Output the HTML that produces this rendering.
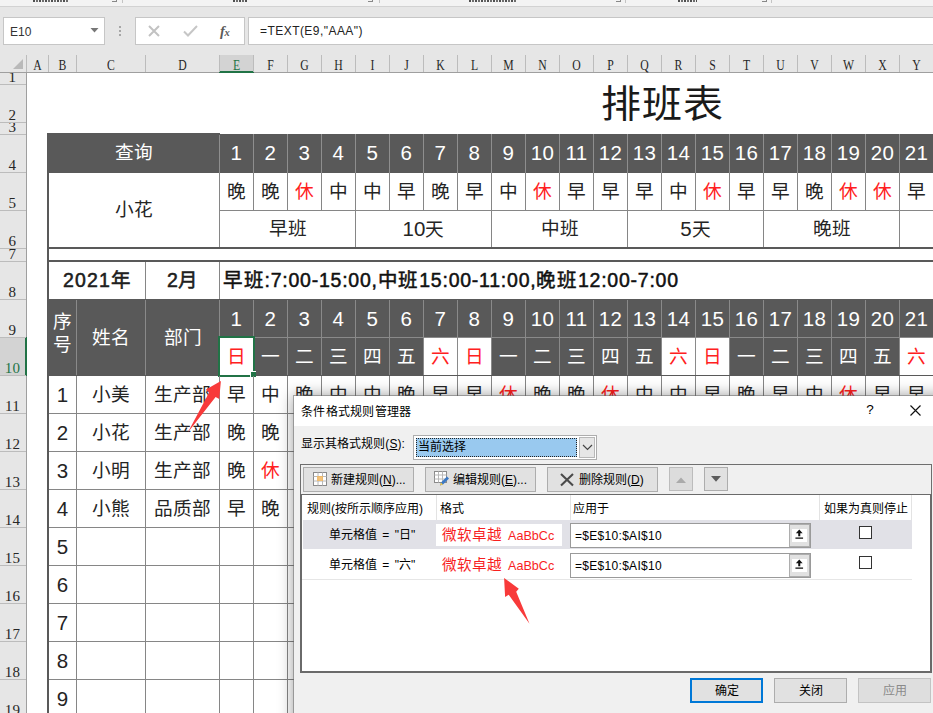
<!DOCTYPE html>
<html lang="zh-CN">
<head>
<meta charset="utf-8">
<title>排班表</title>
<style>
html,body{margin:0;padding:0}
body{width:933px;height:713px;overflow:hidden;position:relative;background:#e6e6e6;font-family:"Liberation Sans",sans-serif;}
#page{position:absolute;left:0;top:0;width:933px;height:713px;overflow:hidden}
#page div,#page svg{position:absolute;overflow:visible}
#page div>span,#page div>u{position:static}
</style>
</head>
<body>
<div id="page">
<div id="top">
<div style="left:0px;top:0px;width:933px;height:6px;background:#f3f3f3"></div>
<div style="left:0px;top:6px;width:933px;height:1px;background:#d2d2d2"></div>
<div style="left:33px;top:0px;width:36px;height:2px;background:repeating-linear-gradient(90deg,#333 0 2px,transparent 2px 3px,#555 3px 5px,transparent 5px 6px);opacity:.85"></div>
<div style="left:233px;top:0px;width:14px;height:2px;background:repeating-linear-gradient(90deg,#333 0 2px,transparent 2px 3px,#555 3px 5px,transparent 5px 6px);opacity:.85"></div>
<div style="left:469px;top:0px;width:47px;height:2px;background:repeating-linear-gradient(90deg,#333 0 2px,transparent 2px 3px,#555 3px 5px,transparent 5px 6px);opacity:.85"></div>
<div style="left:678px;top:0px;width:19px;height:2px;background:repeating-linear-gradient(90deg,#333 0 2px,transparent 2px 3px,#555 3px 5px,transparent 5px 6px);opacity:.85"></div>
<div style="left:112px;top:0px;width:5px;height:2px;border-right:1px solid #888;border-bottom:1px solid #888;box-sizing:border-box"></div>
<div style="left:368px;top:0px;width:5px;height:2px;border-right:1px solid #888;border-bottom:1px solid #888;box-sizing:border-box"></div>
<div style="left:616px;top:0px;width:5px;height:2px;border-right:1px solid #888;border-bottom:1px solid #888;box-sizing:border-box"></div>
<div style="left:762px;top:0px;width:5px;height:2px;border-right:1px solid #888;border-bottom:1px solid #888;box-sizing:border-box"></div>
<div style="left:122px;top:0px;width:1px;height:3px;background:#c4c4c4"></div>
<div style="left:379px;top:0px;width:1px;height:3px;background:#c4c4c4"></div>
<div style="left:625px;top:0px;width:1px;height:3px;background:#c4c4c4"></div>
<div style="left:771px;top:0px;width:1px;height:3px;background:#c4c4c4"></div>
<div style="left:3px;top:17px;width:102px;height:28px;background:#fff;border:1px solid #c6c6c6;box-sizing:border-box"></div>
<div style="left:10px;top:18px;width:60px;height:28px;line-height:28px;font-size:12px;color:#333">E10</div>
<svg style="left:90px;top:28px" width="9" height="5" viewBox="0 0 9 5"><path d="M0.5 0h8L4.5 4.5z" fill="#777"/></svg>
<div style="left:119px;top:26px;width:2px;height:2px;background:#a6a6a6"></div>
<div style="left:119px;top:30px;width:2px;height:2px;background:#a6a6a6"></div>
<div style="left:119px;top:34px;width:2px;height:2px;background:#a6a6a6"></div>
<div style="left:135px;top:17px;width:110px;height:28px;background:#fff;border:1px solid #c6c6c6;box-sizing:border-box"></div>
<svg style="left:148px;top:25px" width="12" height="12" viewBox="0 0 12 12"><path d="M1 1L11 11M11 1L1 11" stroke="#c2c2c2" stroke-width="2" fill="none"/></svg>
<svg style="left:183px;top:25px" width="15" height="12" viewBox="0 0 15 12"><path d="M1 6.5L5 10.5L14 1" stroke="#c6c6c6" stroke-width="2" fill="none"/></svg>
<div style="left:220px;top:20px;width:20px;height:22px;font-family:'Liberation Serif',serif;font-style:italic;font-weight:bold;font-size:14.5px;line-height:22px;color:#5a5a5a;letter-spacing:-0.3px">f<span style="font-size:10.5px">x</span></div>
<div style="left:248px;top:17px;width:690px;height:28px;background:#fff;border:1px solid #c6c6c6;box-sizing:border-box"></div>
<div style="left:260px;top:17px;width:300px;height:28px;line-height:28px;font-size:12px;letter-spacing:0.45px;color:#222">=TEXT(E9,"AAA")</div>
</div>
<div id="sheet">
<div style="left:27px;top:73px;width:906px;height:640px;background:#fff"></div>
<div style="left:0px;top:55px;width:933px;height:18px;background:#e6e6e6"></div>
<div style="left:0px;top:72px;width:933px;height:1px;background:#9f9f9f"></div>
<svg style="left:13px;top:59px" width="10" height="10" viewBox="0 0 10 10"><path d="M10 0V10H0z" fill="#b9b9b9"/></svg>
<div style="left:220px;top:55px;width:34px;height:17px;background:#d3d3d3"></div>
<div style="left:219px;top:71px;width:35px;height:2px;background:#217346"></div>
<div style="left:27px;top:57px;width:21px;height:16px;text-align:center;line-height:17px;font-size:14.67px;transform:scaleX(.8);font-family:'Liberation Serif',serif;color:#262626">A</div>
<div style="left:48px;top:55px;width:1px;height:17px;background:#bcbcbc"></div>
<div style="left:49px;top:57px;width:27px;height:16px;text-align:center;line-height:17px;font-size:14.67px;transform:scaleX(.8);font-family:'Liberation Serif',serif;color:#262626">B</div>
<div style="left:76px;top:55px;width:1px;height:17px;background:#bcbcbc"></div>
<div style="left:77px;top:57px;width:68px;height:16px;text-align:center;line-height:17px;font-size:14.67px;transform:scaleX(.8);font-family:'Liberation Serif',serif;color:#262626">C</div>
<div style="left:145px;top:55px;width:1px;height:17px;background:#bcbcbc"></div>
<div style="left:146px;top:57px;width:73px;height:16px;text-align:center;line-height:17px;font-size:14.67px;transform:scaleX(.8);font-family:'Liberation Serif',serif;color:#262626">D</div>
<div style="left:219px;top:55px;width:1px;height:17px;background:#bcbcbc"></div>
<div style="left:220px;top:57px;width:33px;height:16px;text-align:center;line-height:17px;font-size:14.67px;transform:scaleX(.8);font-family:'Liberation Serif',serif;color:#217346">E</div>
<div style="left:253px;top:55px;width:1px;height:17px;background:#bcbcbc"></div>
<div style="left:254px;top:57px;width:33px;height:16px;text-align:center;line-height:17px;font-size:14.67px;transform:scaleX(.8);font-family:'Liberation Serif',serif;color:#262626">F</div>
<div style="left:287px;top:55px;width:1px;height:17px;background:#bcbcbc"></div>
<div style="left:288px;top:57px;width:33px;height:16px;text-align:center;line-height:17px;font-size:14.67px;transform:scaleX(.8);font-family:'Liberation Serif',serif;color:#262626">G</div>
<div style="left:321px;top:55px;width:1px;height:17px;background:#bcbcbc"></div>
<div style="left:322px;top:57px;width:33px;height:16px;text-align:center;line-height:17px;font-size:14.67px;transform:scaleX(.8);font-family:'Liberation Serif',serif;color:#262626">H</div>
<div style="left:355px;top:55px;width:1px;height:17px;background:#bcbcbc"></div>
<div style="left:356px;top:57px;width:33px;height:16px;text-align:center;line-height:17px;font-size:14.67px;transform:scaleX(.8);font-family:'Liberation Serif',serif;color:#262626">I</div>
<div style="left:389px;top:55px;width:1px;height:17px;background:#bcbcbc"></div>
<div style="left:390px;top:57px;width:33px;height:16px;text-align:center;line-height:17px;font-size:14.67px;transform:scaleX(.8);font-family:'Liberation Serif',serif;color:#262626">J</div>
<div style="left:423px;top:55px;width:1px;height:17px;background:#bcbcbc"></div>
<div style="left:424px;top:57px;width:33px;height:16px;text-align:center;line-height:17px;font-size:14.67px;transform:scaleX(.8);font-family:'Liberation Serif',serif;color:#262626">K</div>
<div style="left:457px;top:55px;width:1px;height:17px;background:#bcbcbc"></div>
<div style="left:458px;top:57px;width:33px;height:16px;text-align:center;line-height:17px;font-size:14.67px;transform:scaleX(.8);font-family:'Liberation Serif',serif;color:#262626">L</div>
<div style="left:491px;top:55px;width:1px;height:17px;background:#bcbcbc"></div>
<div style="left:492px;top:57px;width:33px;height:16px;text-align:center;line-height:17px;font-size:14.67px;transform:scaleX(.8);font-family:'Liberation Serif',serif;color:#262626">M</div>
<div style="left:525px;top:55px;width:1px;height:17px;background:#bcbcbc"></div>
<div style="left:526px;top:57px;width:33px;height:16px;text-align:center;line-height:17px;font-size:14.67px;transform:scaleX(.8);font-family:'Liberation Serif',serif;color:#262626">N</div>
<div style="left:559px;top:55px;width:1px;height:17px;background:#bcbcbc"></div>
<div style="left:560px;top:57px;width:33px;height:16px;text-align:center;line-height:17px;font-size:14.67px;transform:scaleX(.8);font-family:'Liberation Serif',serif;color:#262626">O</div>
<div style="left:593px;top:55px;width:1px;height:17px;background:#bcbcbc"></div>
<div style="left:594px;top:57px;width:33px;height:16px;text-align:center;line-height:17px;font-size:14.67px;transform:scaleX(.8);font-family:'Liberation Serif',serif;color:#262626">P</div>
<div style="left:627px;top:55px;width:1px;height:17px;background:#bcbcbc"></div>
<div style="left:628px;top:57px;width:33px;height:16px;text-align:center;line-height:17px;font-size:14.67px;transform:scaleX(.8);font-family:'Liberation Serif',serif;color:#262626">Q</div>
<div style="left:661px;top:55px;width:1px;height:17px;background:#bcbcbc"></div>
<div style="left:662px;top:57px;width:33px;height:16px;text-align:center;line-height:17px;font-size:14.67px;transform:scaleX(.8);font-family:'Liberation Serif',serif;color:#262626">R</div>
<div style="left:695px;top:55px;width:1px;height:17px;background:#bcbcbc"></div>
<div style="left:696px;top:57px;width:33px;height:16px;text-align:center;line-height:17px;font-size:14.67px;transform:scaleX(.8);font-family:'Liberation Serif',serif;color:#262626">S</div>
<div style="left:729px;top:55px;width:1px;height:17px;background:#bcbcbc"></div>
<div style="left:730px;top:57px;width:33px;height:16px;text-align:center;line-height:17px;font-size:14.67px;transform:scaleX(.8);font-family:'Liberation Serif',serif;color:#262626">T</div>
<div style="left:763px;top:55px;width:1px;height:17px;background:#bcbcbc"></div>
<div style="left:764px;top:57px;width:33px;height:16px;text-align:center;line-height:17px;font-size:14.67px;transform:scaleX(.8);font-family:'Liberation Serif',serif;color:#262626">U</div>
<div style="left:797px;top:55px;width:1px;height:17px;background:#bcbcbc"></div>
<div style="left:798px;top:57px;width:33px;height:16px;text-align:center;line-height:17px;font-size:14.67px;transform:scaleX(.8);font-family:'Liberation Serif',serif;color:#262626">V</div>
<div style="left:831px;top:55px;width:1px;height:17px;background:#bcbcbc"></div>
<div style="left:832px;top:57px;width:33px;height:16px;text-align:center;line-height:17px;font-size:14.67px;transform:scaleX(.8);font-family:'Liberation Serif',serif;color:#262626">W</div>
<div style="left:865px;top:55px;width:1px;height:17px;background:#bcbcbc"></div>
<div style="left:866px;top:57px;width:33px;height:16px;text-align:center;line-height:17px;font-size:14.67px;transform:scaleX(.8);font-family:'Liberation Serif',serif;color:#262626">X</div>
<div style="left:899px;top:55px;width:1px;height:17px;background:#bcbcbc"></div>
<div style="left:900px;top:57px;width:33px;height:16px;text-align:center;line-height:17px;font-size:14.67px;transform:scaleX(.8);font-family:'Liberation Serif',serif;color:#262626">Y</div>
<div style="left:933px;top:55px;width:1px;height:17px;background:#bcbcbc"></div>
<div style="left:26px;top:55px;width:1px;height:17px;background:#bcbcbc"></div>
<div style="left:0px;top:73px;width:26px;height:640px;background:#e6e6e6"></div>
<div style="left:26px;top:73px;width:1px;height:640px;background:#9f9f9f"></div>
<div style="left:0px;top:338px;width:26px;height:37px;background:#d3d3d3"></div>
<div style="left:25px;top:337px;width:2px;height:39px;background:#217346"></div>
<div style="left:0px;top:73px;width:25px;height:11px;overflow:hidden"><div style="left:0.5px;bottom:-1px;width:24px;height:15px;text-align:center;line-height:15px;font-size:15px;letter-spacing:0.3px;font-family:'Liberation Serif',serif;color:#262626">1</div></div>
<div style="left:0px;top:84px;width:26px;height:1px;background:#bcbcbc"></div>
<div style="left:0px;top:85px;width:25px;height:37px;overflow:hidden"><div style="left:0.5px;bottom:-1px;width:24px;height:15px;text-align:center;line-height:15px;font-size:15px;letter-spacing:0.3px;font-family:'Liberation Serif',serif;color:#262626">2</div></div>
<div style="left:0px;top:122px;width:26px;height:1px;background:#bcbcbc"></div>
<div style="left:0px;top:123px;width:25px;height:11px;overflow:hidden"><div style="left:0.5px;bottom:-1px;width:24px;height:15px;text-align:center;line-height:15px;font-size:15px;letter-spacing:0.3px;font-family:'Liberation Serif',serif;color:#262626">3</div></div>
<div style="left:0px;top:134px;width:26px;height:1px;background:#bcbcbc"></div>
<div style="left:0px;top:135px;width:25px;height:37px;overflow:hidden"><div style="left:0.5px;bottom:-1px;width:24px;height:15px;text-align:center;line-height:15px;font-size:15px;letter-spacing:0.3px;font-family:'Liberation Serif',serif;color:#262626">4</div></div>
<div style="left:0px;top:172px;width:26px;height:1px;background:#bcbcbc"></div>
<div style="left:0px;top:173px;width:25px;height:37px;overflow:hidden"><div style="left:0.5px;bottom:-1px;width:24px;height:15px;text-align:center;line-height:15px;font-size:15px;letter-spacing:0.3px;font-family:'Liberation Serif',serif;color:#262626">5</div></div>
<div style="left:0px;top:210px;width:26px;height:1px;background:#bcbcbc"></div>
<div style="left:0px;top:211px;width:25px;height:37px;overflow:hidden"><div style="left:0.5px;bottom:-1px;width:24px;height:15px;text-align:center;line-height:15px;font-size:15px;letter-spacing:0.3px;font-family:'Liberation Serif',serif;color:#262626">6</div></div>
<div style="left:0px;top:248px;width:26px;height:1px;background:#bcbcbc"></div>
<div style="left:0px;top:249px;width:25px;height:12px;overflow:hidden"><div style="left:0.5px;bottom:-1px;width:24px;height:15px;text-align:center;line-height:15px;font-size:15px;letter-spacing:0.3px;font-family:'Liberation Serif',serif;color:#262626">7</div></div>
<div style="left:0px;top:261px;width:26px;height:1px;background:#bcbcbc"></div>
<div style="left:0px;top:262px;width:25px;height:37px;overflow:hidden"><div style="left:0.5px;bottom:-1px;width:24px;height:15px;text-align:center;line-height:15px;font-size:15px;letter-spacing:0.3px;font-family:'Liberation Serif',serif;color:#262626">8</div></div>
<div style="left:0px;top:299px;width:26px;height:1px;background:#bcbcbc"></div>
<div style="left:0px;top:300px;width:25px;height:37px;overflow:hidden"><div style="left:0.5px;bottom:-1px;width:24px;height:15px;text-align:center;line-height:15px;font-size:15px;letter-spacing:0.3px;font-family:'Liberation Serif',serif;color:#262626">9</div></div>
<div style="left:0px;top:337px;width:26px;height:1px;background:#bcbcbc"></div>
<div style="left:0px;top:338px;width:25px;height:37px;overflow:hidden"><div style="left:0.5px;bottom:-1px;width:24px;height:15px;text-align:center;line-height:15px;font-size:15px;letter-spacing:0.3px;font-family:'Liberation Serif',serif;color:#217346">10</div></div>
<div style="left:0px;top:375px;width:26px;height:1px;background:#bcbcbc"></div>
<div style="left:0px;top:376px;width:25px;height:37px;overflow:hidden"><div style="left:0.5px;bottom:-1px;width:24px;height:15px;text-align:center;line-height:15px;font-size:15px;letter-spacing:0.3px;font-family:'Liberation Serif',serif;color:#262626">11</div></div>
<div style="left:0px;top:413px;width:26px;height:1px;background:#bcbcbc"></div>
<div style="left:0px;top:414px;width:25px;height:37px;overflow:hidden"><div style="left:0.5px;bottom:-1px;width:24px;height:15px;text-align:center;line-height:15px;font-size:15px;letter-spacing:0.3px;font-family:'Liberation Serif',serif;color:#262626">12</div></div>
<div style="left:0px;top:451px;width:26px;height:1px;background:#bcbcbc"></div>
<div style="left:0px;top:452px;width:25px;height:37px;overflow:hidden"><div style="left:0.5px;bottom:-1px;width:24px;height:15px;text-align:center;line-height:15px;font-size:15px;letter-spacing:0.3px;font-family:'Liberation Serif',serif;color:#262626">13</div></div>
<div style="left:0px;top:489px;width:26px;height:1px;background:#bcbcbc"></div>
<div style="left:0px;top:490px;width:25px;height:37px;overflow:hidden"><div style="left:0.5px;bottom:-1px;width:24px;height:15px;text-align:center;line-height:15px;font-size:15px;letter-spacing:0.3px;font-family:'Liberation Serif',serif;color:#262626">14</div></div>
<div style="left:0px;top:527px;width:26px;height:1px;background:#bcbcbc"></div>
<div style="left:0px;top:528px;width:25px;height:37px;overflow:hidden"><div style="left:0.5px;bottom:-1px;width:24px;height:15px;text-align:center;line-height:15px;font-size:15px;letter-spacing:0.3px;font-family:'Liberation Serif',serif;color:#262626">15</div></div>
<div style="left:0px;top:565px;width:26px;height:1px;background:#bcbcbc"></div>
<div style="left:0px;top:566px;width:25px;height:37px;overflow:hidden"><div style="left:0.5px;bottom:-1px;width:24px;height:15px;text-align:center;line-height:15px;font-size:15px;letter-spacing:0.3px;font-family:'Liberation Serif',serif;color:#262626">16</div></div>
<div style="left:0px;top:603px;width:26px;height:1px;background:#bcbcbc"></div>
<div style="left:0px;top:604px;width:25px;height:37px;overflow:hidden"><div style="left:0.5px;bottom:-1px;width:24px;height:15px;text-align:center;line-height:15px;font-size:15px;letter-spacing:0.3px;font-family:'Liberation Serif',serif;color:#262626">17</div></div>
<div style="left:0px;top:641px;width:26px;height:1px;background:#bcbcbc"></div>
<div style="left:0px;top:642px;width:25px;height:37px;overflow:hidden"><div style="left:0.5px;bottom:-1px;width:24px;height:15px;text-align:center;line-height:15px;font-size:15px;letter-spacing:0.3px;font-family:'Liberation Serif',serif;color:#262626">18</div></div>
<div style="left:0px;top:679px;width:26px;height:1px;background:#bcbcbc"></div>
<div style="left:0px;top:680px;width:25px;height:37px;overflow:hidden"><div style="left:0.5px;bottom:-1px;width:24px;height:15px;text-align:center;line-height:15px;font-size:15px;letter-spacing:0.3px;font-family:'Liberation Serif',serif;color:#262626">19</div></div>
<div style="left:560px;top:80px;width:204px;height:48px;text-align:center;line-height:48px;font-size:40px;color:#1a1a1a;letter-spacing:0.9px;text-indent:0.9px;transform:scaleY(.95)">排班表</div>
<div style="left:48px;top:133px;width:172px;height:40px;background:#595959"></div>
<div style="left:220px;top:134px;width:713px;height:39px;background:#595959"></div>
<div style="left:48px;top:133px;width:172px;height:40px;text-align:center;line-height:40px;font-size:18.67px;color:#fff;">查询</div>
<div style="left:220px;top:134px;width:33px;height:38px;text-align:center;line-height:38px;font-size:18.67px;color:#fff;font-size:20.5px;letter-spacing:0.4px;">1</div>
<div style="left:253px;top:134px;width:1px;height:39px;background:#8e8e8e"></div>
<div style="left:220px;top:173px;width:33px;height:37px;text-align:center;line-height:37px;font-size:18.67px;color:#242424;">晚</div>
<div style="left:253px;top:173px;width:1px;height:38px;background:#868686"></div>
<div style="left:254px;top:134px;width:33px;height:38px;text-align:center;line-height:38px;font-size:18.67px;color:#fff;font-size:20.5px;letter-spacing:0.4px;">2</div>
<div style="left:287px;top:134px;width:1px;height:39px;background:#8e8e8e"></div>
<div style="left:254px;top:173px;width:33px;height:37px;text-align:center;line-height:37px;font-size:18.67px;color:#242424;">晚</div>
<div style="left:287px;top:173px;width:1px;height:38px;background:#868686"></div>
<div style="left:288px;top:134px;width:33px;height:38px;text-align:center;line-height:38px;font-size:18.67px;color:#fff;font-size:20.5px;letter-spacing:0.4px;">3</div>
<div style="left:321px;top:134px;width:1px;height:39px;background:#8e8e8e"></div>
<div style="left:288px;top:173px;width:33px;height:37px;text-align:center;line-height:37px;font-size:18.67px;color:#ff2020;">休</div>
<div style="left:321px;top:173px;width:1px;height:38px;background:#868686"></div>
<div style="left:322px;top:134px;width:33px;height:38px;text-align:center;line-height:38px;font-size:18.67px;color:#fff;font-size:20.5px;letter-spacing:0.4px;">4</div>
<div style="left:355px;top:134px;width:1px;height:39px;background:#8e8e8e"></div>
<div style="left:322px;top:173px;width:33px;height:37px;text-align:center;line-height:37px;font-size:18.67px;color:#242424;">中</div>
<div style="left:355px;top:173px;width:1px;height:38px;background:#868686"></div>
<div style="left:356px;top:134px;width:33px;height:38px;text-align:center;line-height:38px;font-size:18.67px;color:#fff;font-size:20.5px;letter-spacing:0.4px;">5</div>
<div style="left:389px;top:134px;width:1px;height:39px;background:#8e8e8e"></div>
<div style="left:356px;top:173px;width:33px;height:37px;text-align:center;line-height:37px;font-size:18.67px;color:#242424;">中</div>
<div style="left:389px;top:173px;width:1px;height:38px;background:#868686"></div>
<div style="left:390px;top:134px;width:33px;height:38px;text-align:center;line-height:38px;font-size:18.67px;color:#fff;font-size:20.5px;letter-spacing:0.4px;">6</div>
<div style="left:423px;top:134px;width:1px;height:39px;background:#8e8e8e"></div>
<div style="left:390px;top:173px;width:33px;height:37px;text-align:center;line-height:37px;font-size:18.67px;color:#242424;">早</div>
<div style="left:423px;top:173px;width:1px;height:38px;background:#868686"></div>
<div style="left:424px;top:134px;width:33px;height:38px;text-align:center;line-height:38px;font-size:18.67px;color:#fff;font-size:20.5px;letter-spacing:0.4px;">7</div>
<div style="left:457px;top:134px;width:1px;height:39px;background:#8e8e8e"></div>
<div style="left:424px;top:173px;width:33px;height:37px;text-align:center;line-height:37px;font-size:18.67px;color:#242424;">晚</div>
<div style="left:457px;top:173px;width:1px;height:38px;background:#868686"></div>
<div style="left:458px;top:134px;width:33px;height:38px;text-align:center;line-height:38px;font-size:18.67px;color:#fff;font-size:20.5px;letter-spacing:0.4px;">8</div>
<div style="left:491px;top:134px;width:1px;height:39px;background:#8e8e8e"></div>
<div style="left:458px;top:173px;width:33px;height:37px;text-align:center;line-height:37px;font-size:18.67px;color:#242424;">早</div>
<div style="left:491px;top:173px;width:1px;height:38px;background:#868686"></div>
<div style="left:492px;top:134px;width:33px;height:38px;text-align:center;line-height:38px;font-size:18.67px;color:#fff;font-size:20.5px;letter-spacing:0.4px;">9</div>
<div style="left:525px;top:134px;width:1px;height:39px;background:#8e8e8e"></div>
<div style="left:492px;top:173px;width:33px;height:37px;text-align:center;line-height:37px;font-size:18.67px;color:#242424;">中</div>
<div style="left:525px;top:173px;width:1px;height:38px;background:#868686"></div>
<div style="left:526px;top:134px;width:33px;height:38px;text-align:center;line-height:38px;font-size:18.67px;color:#fff;font-size:20.5px;letter-spacing:0.4px;">10</div>
<div style="left:559px;top:134px;width:1px;height:39px;background:#8e8e8e"></div>
<div style="left:526px;top:173px;width:33px;height:37px;text-align:center;line-height:37px;font-size:18.67px;color:#ff2020;">休</div>
<div style="left:559px;top:173px;width:1px;height:38px;background:#868686"></div>
<div style="left:560px;top:134px;width:33px;height:38px;text-align:center;line-height:38px;font-size:18.67px;color:#fff;font-size:20.5px;letter-spacing:0.4px;">11</div>
<div style="left:593px;top:134px;width:1px;height:39px;background:#8e8e8e"></div>
<div style="left:560px;top:173px;width:33px;height:37px;text-align:center;line-height:37px;font-size:18.67px;color:#242424;">早</div>
<div style="left:593px;top:173px;width:1px;height:38px;background:#868686"></div>
<div style="left:594px;top:134px;width:33px;height:38px;text-align:center;line-height:38px;font-size:18.67px;color:#fff;font-size:20.5px;letter-spacing:0.4px;">12</div>
<div style="left:627px;top:134px;width:1px;height:39px;background:#8e8e8e"></div>
<div style="left:594px;top:173px;width:33px;height:37px;text-align:center;line-height:37px;font-size:18.67px;color:#242424;">早</div>
<div style="left:627px;top:173px;width:1px;height:38px;background:#868686"></div>
<div style="left:628px;top:134px;width:33px;height:38px;text-align:center;line-height:38px;font-size:18.67px;color:#fff;font-size:20.5px;letter-spacing:0.4px;">13</div>
<div style="left:661px;top:134px;width:1px;height:39px;background:#8e8e8e"></div>
<div style="left:628px;top:173px;width:33px;height:37px;text-align:center;line-height:37px;font-size:18.67px;color:#242424;">早</div>
<div style="left:661px;top:173px;width:1px;height:38px;background:#868686"></div>
<div style="left:662px;top:134px;width:33px;height:38px;text-align:center;line-height:38px;font-size:18.67px;color:#fff;font-size:20.5px;letter-spacing:0.4px;">14</div>
<div style="left:695px;top:134px;width:1px;height:39px;background:#8e8e8e"></div>
<div style="left:662px;top:173px;width:33px;height:37px;text-align:center;line-height:37px;font-size:18.67px;color:#242424;">中</div>
<div style="left:695px;top:173px;width:1px;height:38px;background:#868686"></div>
<div style="left:696px;top:134px;width:33px;height:38px;text-align:center;line-height:38px;font-size:18.67px;color:#fff;font-size:20.5px;letter-spacing:0.4px;">15</div>
<div style="left:729px;top:134px;width:1px;height:39px;background:#8e8e8e"></div>
<div style="left:696px;top:173px;width:33px;height:37px;text-align:center;line-height:37px;font-size:18.67px;color:#ff2020;">休</div>
<div style="left:729px;top:173px;width:1px;height:38px;background:#868686"></div>
<div style="left:730px;top:134px;width:33px;height:38px;text-align:center;line-height:38px;font-size:18.67px;color:#fff;font-size:20.5px;letter-spacing:0.4px;">16</div>
<div style="left:763px;top:134px;width:1px;height:39px;background:#8e8e8e"></div>
<div style="left:730px;top:173px;width:33px;height:37px;text-align:center;line-height:37px;font-size:18.67px;color:#242424;">早</div>
<div style="left:763px;top:173px;width:1px;height:38px;background:#868686"></div>
<div style="left:764px;top:134px;width:33px;height:38px;text-align:center;line-height:38px;font-size:18.67px;color:#fff;font-size:20.5px;letter-spacing:0.4px;">17</div>
<div style="left:797px;top:134px;width:1px;height:39px;background:#8e8e8e"></div>
<div style="left:764px;top:173px;width:33px;height:37px;text-align:center;line-height:37px;font-size:18.67px;color:#242424;">早</div>
<div style="left:797px;top:173px;width:1px;height:38px;background:#868686"></div>
<div style="left:798px;top:134px;width:33px;height:38px;text-align:center;line-height:38px;font-size:18.67px;color:#fff;font-size:20.5px;letter-spacing:0.4px;">18</div>
<div style="left:831px;top:134px;width:1px;height:39px;background:#8e8e8e"></div>
<div style="left:798px;top:173px;width:33px;height:37px;text-align:center;line-height:37px;font-size:18.67px;color:#242424;">晚</div>
<div style="left:831px;top:173px;width:1px;height:38px;background:#868686"></div>
<div style="left:832px;top:134px;width:33px;height:38px;text-align:center;line-height:38px;font-size:18.67px;color:#fff;font-size:20.5px;letter-spacing:0.4px;">19</div>
<div style="left:865px;top:134px;width:1px;height:39px;background:#8e8e8e"></div>
<div style="left:832px;top:173px;width:33px;height:37px;text-align:center;line-height:37px;font-size:18.67px;color:#ff2020;">休</div>
<div style="left:865px;top:173px;width:1px;height:38px;background:#868686"></div>
<div style="left:866px;top:134px;width:33px;height:38px;text-align:center;line-height:38px;font-size:18.67px;color:#fff;font-size:20.5px;letter-spacing:0.4px;">20</div>
<div style="left:899px;top:134px;width:1px;height:39px;background:#8e8e8e"></div>
<div style="left:866px;top:173px;width:33px;height:37px;text-align:center;line-height:37px;font-size:18.67px;color:#ff2020;">休</div>
<div style="left:899px;top:173px;width:1px;height:38px;background:#868686"></div>
<div style="left:900px;top:134px;width:33px;height:38px;text-align:center;line-height:38px;font-size:18.67px;color:#fff;font-size:20.5px;letter-spacing:0.4px;">21</div>
<div style="left:933px;top:134px;width:1px;height:39px;background:#8e8e8e"></div>
<div style="left:900px;top:173px;width:33px;height:37px;text-align:center;line-height:37px;font-size:18.67px;color:#242424;">早</div>
<div style="left:933px;top:173px;width:1px;height:38px;background:#868686"></div>
<div style="left:219px;top:135px;width:1px;height:38px;background:#8e8e8e"></div>
<div style="left:219px;top:173px;width:1px;height:75px;background:#868686"></div>
<div style="left:220px;top:210px;width:713px;height:1px;background:#868686"></div>
<div style="left:220px;top:211px;width:135px;height:36px;text-align:center;line-height:36px;font-size:18.67px;color:#242424;">早班</div>
<div style="left:355px;top:211px;width:1px;height:37px;background:#868686"></div>
<div style="left:356px;top:211px;width:135px;height:36px;text-align:center;line-height:36px;font-size:18.67px;color:#242424;"><span style="font-size:20.5px">10</span>天</div>
<div style="left:491px;top:211px;width:1px;height:37px;background:#868686"></div>
<div style="left:492px;top:211px;width:135px;height:36px;text-align:center;line-height:36px;font-size:18.67px;color:#242424;">中班</div>
<div style="left:627px;top:211px;width:1px;height:37px;background:#868686"></div>
<div style="left:628px;top:211px;width:135px;height:36px;text-align:center;line-height:36px;font-size:18.67px;color:#242424;"><span style="font-size:20.5px">5</span>天</div>
<div style="left:763px;top:211px;width:1px;height:37px;background:#868686"></div>
<div style="left:764px;top:211px;width:135px;height:36px;text-align:center;line-height:36px;font-size:18.67px;color:#242424;">晚班</div>
<div style="left:899px;top:211px;width:1px;height:37px;background:#868686"></div>
<div style="left:900px;top:211px;width:135px;height:36px;text-align:center;line-height:36px;font-size:18.67px;color:#242424;"></div>
<div style="left:1035px;top:211px;width:1px;height:37px;background:#868686"></div>
<div style="left:48px;top:173px;width:171px;height:74px;text-align:center;line-height:74px;font-size:18.67px;color:#242424;">小花</div>
<div style="left:47px;top:133px;width:2px;height:580px;background:#595959"></div>
<div style="left:47px;top:247px;width:886px;height:2px;background:#595959"></div>
<div style="left:47px;top:260px;width:886px;height:2px;background:#595959"></div>
<div style="left:49px;top:262px;width:96px;height:37px;text-align:center;line-height:37px;font-size:18.67px;color:#242424;font-size:19.5px;-webkit-text-stroke:0.5px #111;letter-spacing:1.1px;text-indent:1.1px;">2021年</div>
<div style="left:146px;top:262px;width:73px;height:37px;text-align:center;line-height:37px;font-size:18.67px;color:#242424;font-size:19.5px;-webkit-text-stroke:0.5px #111;">2月</div>
<div style="left:145px;top:262px;width:1px;height:38px;background:#868686"></div>
<div style="left:219px;top:262px;width:1px;height:38px;background:#868686"></div>
<div style="left:223px;top:262px;width:600px;height:37px;line-height:37px;font-size:18.67px;font-size:19.5px;-webkit-text-stroke:0.5px #111;color:#111;white-space:nowrap;letter-spacing:0.76px">早班:7:00-15:00,中班15:00-11:00,晚班12:00-7:00</div>
<div style="left:48px;top:299px;width:885px;height:77px;background:#595959"></div>
<div style="left:49px;top:310px;width:27px;height:50px;text-align:center;line-height:23px;font-size:18.67px;color:#fff">序<br>号</div>
<div style="left:77px;top:300px;width:68px;height:75px;text-align:center;line-height:75px;font-size:18.67px;color:#fff;">姓名</div>
<div style="left:146px;top:300px;width:73px;height:75px;text-align:center;line-height:75px;font-size:18.67px;color:#fff;">部门</div>
<div style="left:76px;top:300px;width:1px;height:75px;background:#8a8a8a"></div>
<div style="left:145px;top:300px;width:1px;height:75px;background:#8a8a8a"></div>
<div style="left:219px;top:300px;width:1px;height:75px;background:#8a8a8a"></div>
<div style="left:220px;top:300px;width:33px;height:37px;text-align:center;line-height:37px;font-size:18.67px;color:#fff;font-size:20.5px;letter-spacing:0.4px;">1</div>
<div style="left:220px;top:338px;width:33px;height:37px;text-align:center;line-height:37px;font-size:18.67px;color:#ff2020;background:#fff;">日</div>
<div style="left:253px;top:300px;width:1px;height:75px;background:#8a8a8a"></div>
<div style="left:254px;top:300px;width:33px;height:37px;text-align:center;line-height:37px;font-size:18.67px;color:#fff;font-size:20.5px;letter-spacing:0.4px;">2</div>
<div style="left:254px;top:338px;width:33px;height:37px;text-align:center;line-height:37px;font-size:18.67px;color:#fff;">一</div>
<div style="left:287px;top:300px;width:1px;height:75px;background:#8a8a8a"></div>
<div style="left:288px;top:300px;width:33px;height:37px;text-align:center;line-height:37px;font-size:18.67px;color:#fff;font-size:20.5px;letter-spacing:0.4px;">3</div>
<div style="left:288px;top:338px;width:33px;height:37px;text-align:center;line-height:37px;font-size:18.67px;color:#fff;">二</div>
<div style="left:321px;top:300px;width:1px;height:75px;background:#8a8a8a"></div>
<div style="left:322px;top:300px;width:33px;height:37px;text-align:center;line-height:37px;font-size:18.67px;color:#fff;font-size:20.5px;letter-spacing:0.4px;">4</div>
<div style="left:322px;top:338px;width:33px;height:37px;text-align:center;line-height:37px;font-size:18.67px;color:#fff;">三</div>
<div style="left:355px;top:300px;width:1px;height:75px;background:#8a8a8a"></div>
<div style="left:356px;top:300px;width:33px;height:37px;text-align:center;line-height:37px;font-size:18.67px;color:#fff;font-size:20.5px;letter-spacing:0.4px;">5</div>
<div style="left:356px;top:338px;width:33px;height:37px;text-align:center;line-height:37px;font-size:18.67px;color:#fff;">四</div>
<div style="left:389px;top:300px;width:1px;height:75px;background:#8a8a8a"></div>
<div style="left:390px;top:300px;width:33px;height:37px;text-align:center;line-height:37px;font-size:18.67px;color:#fff;font-size:20.5px;letter-spacing:0.4px;">6</div>
<div style="left:390px;top:338px;width:33px;height:37px;text-align:center;line-height:37px;font-size:18.67px;color:#fff;">五</div>
<div style="left:423px;top:300px;width:1px;height:75px;background:#8a8a8a"></div>
<div style="left:424px;top:300px;width:33px;height:37px;text-align:center;line-height:37px;font-size:18.67px;color:#fff;font-size:20.5px;letter-spacing:0.4px;">7</div>
<div style="left:424px;top:338px;width:33px;height:37px;text-align:center;line-height:37px;font-size:18.67px;color:#ff2020;background:#fff;">六</div>
<div style="left:457px;top:300px;width:1px;height:75px;background:#8a8a8a"></div>
<div style="left:458px;top:300px;width:33px;height:37px;text-align:center;line-height:37px;font-size:18.67px;color:#fff;font-size:20.5px;letter-spacing:0.4px;">8</div>
<div style="left:458px;top:338px;width:33px;height:37px;text-align:center;line-height:37px;font-size:18.67px;color:#ff2020;background:#fff;">日</div>
<div style="left:491px;top:300px;width:1px;height:75px;background:#8a8a8a"></div>
<div style="left:492px;top:300px;width:33px;height:37px;text-align:center;line-height:37px;font-size:18.67px;color:#fff;font-size:20.5px;letter-spacing:0.4px;">9</div>
<div style="left:492px;top:338px;width:33px;height:37px;text-align:center;line-height:37px;font-size:18.67px;color:#fff;">一</div>
<div style="left:525px;top:300px;width:1px;height:75px;background:#8a8a8a"></div>
<div style="left:526px;top:300px;width:33px;height:37px;text-align:center;line-height:37px;font-size:18.67px;color:#fff;font-size:20.5px;letter-spacing:0.4px;">10</div>
<div style="left:526px;top:338px;width:33px;height:37px;text-align:center;line-height:37px;font-size:18.67px;color:#fff;">二</div>
<div style="left:559px;top:300px;width:1px;height:75px;background:#8a8a8a"></div>
<div style="left:560px;top:300px;width:33px;height:37px;text-align:center;line-height:37px;font-size:18.67px;color:#fff;font-size:20.5px;letter-spacing:0.4px;">11</div>
<div style="left:560px;top:338px;width:33px;height:37px;text-align:center;line-height:37px;font-size:18.67px;color:#fff;">三</div>
<div style="left:593px;top:300px;width:1px;height:75px;background:#8a8a8a"></div>
<div style="left:594px;top:300px;width:33px;height:37px;text-align:center;line-height:37px;font-size:18.67px;color:#fff;font-size:20.5px;letter-spacing:0.4px;">12</div>
<div style="left:594px;top:338px;width:33px;height:37px;text-align:center;line-height:37px;font-size:18.67px;color:#fff;">四</div>
<div style="left:627px;top:300px;width:1px;height:75px;background:#8a8a8a"></div>
<div style="left:628px;top:300px;width:33px;height:37px;text-align:center;line-height:37px;font-size:18.67px;color:#fff;font-size:20.5px;letter-spacing:0.4px;">13</div>
<div style="left:628px;top:338px;width:33px;height:37px;text-align:center;line-height:37px;font-size:18.67px;color:#fff;">五</div>
<div style="left:661px;top:300px;width:1px;height:75px;background:#8a8a8a"></div>
<div style="left:662px;top:300px;width:33px;height:37px;text-align:center;line-height:37px;font-size:18.67px;color:#fff;font-size:20.5px;letter-spacing:0.4px;">14</div>
<div style="left:662px;top:338px;width:33px;height:37px;text-align:center;line-height:37px;font-size:18.67px;color:#ff2020;background:#fff;">六</div>
<div style="left:695px;top:300px;width:1px;height:75px;background:#8a8a8a"></div>
<div style="left:696px;top:300px;width:33px;height:37px;text-align:center;line-height:37px;font-size:18.67px;color:#fff;font-size:20.5px;letter-spacing:0.4px;">15</div>
<div style="left:696px;top:338px;width:33px;height:37px;text-align:center;line-height:37px;font-size:18.67px;color:#ff2020;background:#fff;">日</div>
<div style="left:729px;top:300px;width:1px;height:75px;background:#8a8a8a"></div>
<div style="left:730px;top:300px;width:33px;height:37px;text-align:center;line-height:37px;font-size:18.67px;color:#fff;font-size:20.5px;letter-spacing:0.4px;">16</div>
<div style="left:730px;top:338px;width:33px;height:37px;text-align:center;line-height:37px;font-size:18.67px;color:#fff;">一</div>
<div style="left:763px;top:300px;width:1px;height:75px;background:#8a8a8a"></div>
<div style="left:764px;top:300px;width:33px;height:37px;text-align:center;line-height:37px;font-size:18.67px;color:#fff;font-size:20.5px;letter-spacing:0.4px;">17</div>
<div style="left:764px;top:338px;width:33px;height:37px;text-align:center;line-height:37px;font-size:18.67px;color:#fff;">二</div>
<div style="left:797px;top:300px;width:1px;height:75px;background:#8a8a8a"></div>
<div style="left:798px;top:300px;width:33px;height:37px;text-align:center;line-height:37px;font-size:18.67px;color:#fff;font-size:20.5px;letter-spacing:0.4px;">18</div>
<div style="left:798px;top:338px;width:33px;height:37px;text-align:center;line-height:37px;font-size:18.67px;color:#fff;">三</div>
<div style="left:831px;top:300px;width:1px;height:75px;background:#8a8a8a"></div>
<div style="left:832px;top:300px;width:33px;height:37px;text-align:center;line-height:37px;font-size:18.67px;color:#fff;font-size:20.5px;letter-spacing:0.4px;">19</div>
<div style="left:832px;top:338px;width:33px;height:37px;text-align:center;line-height:37px;font-size:18.67px;color:#fff;">四</div>
<div style="left:865px;top:300px;width:1px;height:75px;background:#8a8a8a"></div>
<div style="left:866px;top:300px;width:33px;height:37px;text-align:center;line-height:37px;font-size:18.67px;color:#fff;font-size:20.5px;letter-spacing:0.4px;">20</div>
<div style="left:866px;top:338px;width:33px;height:37px;text-align:center;line-height:37px;font-size:18.67px;color:#fff;">五</div>
<div style="left:899px;top:300px;width:1px;height:75px;background:#8a8a8a"></div>
<div style="left:900px;top:300px;width:33px;height:37px;text-align:center;line-height:37px;font-size:18.67px;color:#fff;font-size:20.5px;letter-spacing:0.4px;">21</div>
<div style="left:900px;top:338px;width:33px;height:37px;text-align:center;line-height:37px;font-size:18.67px;color:#ff2020;background:#fff;">六</div>
<div style="left:933px;top:300px;width:1px;height:75px;background:#8a8a8a"></div>
<div style="left:220px;top:337px;width:713px;height:1px;background:#8a8a8a"></div>
<div style="left:218px;top:336px;width:37px;height:41px;border:2px solid #217346;box-sizing:border-box"></div>
<div style="left:250px;top:371px;width:5px;height:5px;background:#217346;border-left:1px solid #fff;border-top:1px solid #fff"></div>
<div style="left:49px;top:376px;width:27px;height:37px;text-align:center;line-height:37px;font-size:18.67px;color:#242424;font-size:20.5px;">1</div>
<div style="left:77px;top:376px;width:68px;height:37px;text-align:center;line-height:37px;font-size:18.67px;color:#242424;">小美</div>
<div style="left:146px;top:376px;width:73px;height:37px;text-align:center;line-height:37px;font-size:18.67px;color:#242424;">生产部</div>
<div style="left:220px;top:376px;width:33px;height:37px;text-align:center;line-height:37px;font-size:18.67px;color:#242424;">早</div>
<div style="left:254px;top:376px;width:33px;height:37px;text-align:center;line-height:37px;font-size:18.67px;color:#242424;">中</div>
<div style="left:288px;top:376px;width:33px;height:37px;text-align:center;line-height:37px;font-size:18.67px;color:#242424;">晚</div>
<div style="left:322px;top:376px;width:33px;height:37px;text-align:center;line-height:37px;font-size:18.67px;color:#242424;">中</div>
<div style="left:356px;top:376px;width:33px;height:37px;text-align:center;line-height:37px;font-size:18.67px;color:#242424;">中</div>
<div style="left:390px;top:376px;width:33px;height:37px;text-align:center;line-height:37px;font-size:18.67px;color:#242424;">晚</div>
<div style="left:424px;top:376px;width:33px;height:37px;text-align:center;line-height:37px;font-size:18.67px;color:#242424;">早</div>
<div style="left:458px;top:376px;width:33px;height:37px;text-align:center;line-height:37px;font-size:18.67px;color:#242424;">早</div>
<div style="left:492px;top:376px;width:33px;height:37px;text-align:center;line-height:37px;font-size:18.67px;color:#ff2020;">休</div>
<div style="left:526px;top:376px;width:33px;height:37px;text-align:center;line-height:37px;font-size:18.67px;color:#242424;">晚</div>
<div style="left:560px;top:376px;width:33px;height:37px;text-align:center;line-height:37px;font-size:18.67px;color:#242424;">晚</div>
<div style="left:594px;top:376px;width:33px;height:37px;text-align:center;line-height:37px;font-size:18.67px;color:#ff2020;">休</div>
<div style="left:628px;top:376px;width:33px;height:37px;text-align:center;line-height:37px;font-size:18.67px;color:#242424;">中</div>
<div style="left:662px;top:376px;width:33px;height:37px;text-align:center;line-height:37px;font-size:18.67px;color:#242424;">中</div>
<div style="left:696px;top:376px;width:33px;height:37px;text-align:center;line-height:37px;font-size:18.67px;color:#242424;">早</div>
<div style="left:730px;top:376px;width:33px;height:37px;text-align:center;line-height:37px;font-size:18.67px;color:#242424;">晚</div>
<div style="left:764px;top:376px;width:33px;height:37px;text-align:center;line-height:37px;font-size:18.67px;color:#242424;">早</div>
<div style="left:798px;top:376px;width:33px;height:37px;text-align:center;line-height:37px;font-size:18.67px;color:#242424;">中</div>
<div style="left:832px;top:376px;width:33px;height:37px;text-align:center;line-height:37px;font-size:18.67px;color:#ff2020;">休</div>
<div style="left:866px;top:376px;width:33px;height:37px;text-align:center;line-height:37px;font-size:18.67px;color:#242424;">早</div>
<div style="left:900px;top:376px;width:33px;height:37px;text-align:center;line-height:37px;font-size:18.67px;color:#242424;">早</div>
<div style="left:49px;top:413px;width:884px;height:1px;background:#868686"></div>
<div style="left:49px;top:414px;width:27px;height:37px;text-align:center;line-height:37px;font-size:18.67px;color:#242424;font-size:20.5px;">2</div>
<div style="left:77px;top:414px;width:68px;height:37px;text-align:center;line-height:37px;font-size:18.67px;color:#242424;">小花</div>
<div style="left:146px;top:414px;width:73px;height:37px;text-align:center;line-height:37px;font-size:18.67px;color:#242424;">生产部</div>
<div style="left:220px;top:414px;width:33px;height:37px;text-align:center;line-height:37px;font-size:18.67px;color:#242424;">晚</div>
<div style="left:254px;top:414px;width:33px;height:37px;text-align:center;line-height:37px;font-size:18.67px;color:#242424;">晚</div>
<div style="left:49px;top:451px;width:884px;height:1px;background:#868686"></div>
<div style="left:49px;top:452px;width:27px;height:37px;text-align:center;line-height:37px;font-size:18.67px;color:#242424;font-size:20.5px;">3</div>
<div style="left:77px;top:452px;width:68px;height:37px;text-align:center;line-height:37px;font-size:18.67px;color:#242424;">小明</div>
<div style="left:146px;top:452px;width:73px;height:37px;text-align:center;line-height:37px;font-size:18.67px;color:#242424;">生产部</div>
<div style="left:220px;top:452px;width:33px;height:37px;text-align:center;line-height:37px;font-size:18.67px;color:#242424;">晚</div>
<div style="left:254px;top:452px;width:33px;height:37px;text-align:center;line-height:37px;font-size:18.67px;color:#ff2020;">休</div>
<div style="left:49px;top:489px;width:884px;height:1px;background:#868686"></div>
<div style="left:49px;top:490px;width:27px;height:37px;text-align:center;line-height:37px;font-size:18.67px;color:#242424;font-size:20.5px;">4</div>
<div style="left:77px;top:490px;width:68px;height:37px;text-align:center;line-height:37px;font-size:18.67px;color:#242424;">小熊</div>
<div style="left:146px;top:490px;width:73px;height:37px;text-align:center;line-height:37px;font-size:18.67px;color:#242424;">品质部</div>
<div style="left:220px;top:490px;width:33px;height:37px;text-align:center;line-height:37px;font-size:18.67px;color:#242424;">早</div>
<div style="left:254px;top:490px;width:33px;height:37px;text-align:center;line-height:37px;font-size:18.67px;color:#242424;">晚</div>
<div style="left:49px;top:527px;width:884px;height:1px;background:#868686"></div>
<div style="left:49px;top:528px;width:27px;height:37px;text-align:center;line-height:37px;font-size:18.67px;color:#242424;font-size:20.5px;">5</div>
<div style="left:49px;top:565px;width:884px;height:1px;background:#868686"></div>
<div style="left:49px;top:566px;width:27px;height:37px;text-align:center;line-height:37px;font-size:18.67px;color:#242424;font-size:20.5px;">6</div>
<div style="left:49px;top:603px;width:884px;height:1px;background:#868686"></div>
<div style="left:49px;top:604px;width:27px;height:37px;text-align:center;line-height:37px;font-size:18.67px;color:#242424;font-size:20.5px;">7</div>
<div style="left:49px;top:641px;width:884px;height:1px;background:#868686"></div>
<div style="left:49px;top:642px;width:27px;height:37px;text-align:center;line-height:37px;font-size:18.67px;color:#242424;font-size:20.5px;">8</div>
<div style="left:49px;top:679px;width:884px;height:1px;background:#868686"></div>
<div style="left:49px;top:680px;width:27px;height:37px;text-align:center;line-height:37px;font-size:18.67px;color:#242424;font-size:20.5px;">9</div>
<div style="left:76px;top:376px;width:1px;height:340px;background:#868686"></div>
<div style="left:145px;top:376px;width:1px;height:340px;background:#868686"></div>
<div style="left:219px;top:376px;width:1px;height:340px;background:#868686"></div>
<div style="left:253px;top:376px;width:1px;height:340px;background:#868686"></div>
<div style="left:287px;top:376px;width:1px;height:340px;background:#868686"></div>
<div style="left:321px;top:376px;width:1px;height:340px;background:#868686"></div>
<div style="left:355px;top:376px;width:1px;height:340px;background:#868686"></div>
<div style="left:389px;top:376px;width:1px;height:340px;background:#868686"></div>
<div style="left:423px;top:376px;width:1px;height:340px;background:#868686"></div>
<div style="left:457px;top:376px;width:1px;height:340px;background:#868686"></div>
<div style="left:491px;top:376px;width:1px;height:340px;background:#868686"></div>
<div style="left:525px;top:376px;width:1px;height:340px;background:#868686"></div>
<div style="left:559px;top:376px;width:1px;height:340px;background:#868686"></div>
<div style="left:593px;top:376px;width:1px;height:340px;background:#868686"></div>
<div style="left:627px;top:376px;width:1px;height:340px;background:#868686"></div>
<div style="left:661px;top:376px;width:1px;height:340px;background:#868686"></div>
<div style="left:695px;top:376px;width:1px;height:340px;background:#868686"></div>
<div style="left:729px;top:376px;width:1px;height:340px;background:#868686"></div>
<div style="left:763px;top:376px;width:1px;height:340px;background:#868686"></div>
<div style="left:797px;top:376px;width:1px;height:340px;background:#868686"></div>
<div style="left:831px;top:376px;width:1px;height:340px;background:#868686"></div>
<div style="left:865px;top:376px;width:1px;height:340px;background:#868686"></div>
<div style="left:899px;top:376px;width:1px;height:340px;background:#868686"></div>
<div style="left:933px;top:376px;width:1px;height:340px;background:#868686"></div>
</div>
<svg style="left:180px;top:370px" width="50" height="70" viewBox="180 370 50 70"><path d="M220.9 380.9 L206 389.6 L209 392.8 L187.8 432.5 L215.6 396.9 L219.2 399 Z" fill="#f83a3a"/></svg>
<div id="dlg">
<div style="left:294px;top:396px;width:660px;height:340px;background:#f0f0f0;box-shadow:0 0 14px 1px rgba(0,0,0,.38);outline:1px solid rgba(110,110,110,.55)"></div>
<div style="left:294px;top:396px;width:660px;height:30px;background:#fff"></div>
<div style="left:301px;top:403px;width:200px;height:18px;font-size:12px;line-height:18px;color:#000;white-space:nowrap;letter-spacing:0.3px">条件格式规则管理器</div>
<div style="left:862px;top:401px;width:16px;height:18px;font-size:13.5px;line-height:18px;color:#000;text-align:center">?</div>
<svg style="left:909.5px;top:404.5px" width="11" height="11" viewBox="0 0 11 11"><path d="M0.5 0.5L10.5 10.5M10.5 0.5L0.5 10.5" stroke="#111" stroke-width="1.15" fill="none"/></svg>
<div style="left:301px;top:435px;width:120px;height:18px;font-size:12px;line-height:18px;color:#000;white-space:nowrap;letter-spacing:0.05px">显示其格式规则(<u>S</u>):</div>
<div style="left:413px;top:435px;width:184px;height:25px;background:#fff;border:1px solid #adadad;box-sizing:border-box"></div>
<div style="left:416px;top:438px;width:161px;height:19px;background:#99c9ef;border:1px dotted #222;box-sizing:border-box"></div>
<div style="left:418px;top:438px;width:100px;height:19px;font-size:12px;line-height:19px;color:#000;white-space:nowrap">当前选择</div>
<div style="left:579px;top:437px;width:16px;height:21px;background:#e6e6e6;border:1px solid #b8b8b8;box-sizing:border-box"></div>
<svg style="left:581.5px;top:444px" width="11" height="7" viewBox="0 0 11 7"><path d="M1 1L5.5 5.5L10 1" stroke="#444" stroke-width="1.2" fill="none"/></svg>
<div style="left:300px;top:464px;width:632px;height:31px;background:#f0f0f0;border:1px solid #6e6e6e;box-sizing:border-box"></div>
<div style="left:303px;top:467px;width:111px;height:25px;background:#e1e1e1;border:1px solid #adadad;box-sizing:border-box"></div>

<svg style="left:313px;top:472px" width="14" height="14" viewBox="0 0 14 14"><rect x="0.5" y="0.5" width="13" height="13" fill="#fff" stroke="#8a8a8a"/><path d="M0.5 4.5H13.5M0.5 9H13.5M5 0.5V13.5M9.5 0.5V13.5" stroke="#b8b8b8" stroke-width="1"/><rect x="4" y="4" width="6" height="5" fill="#f4b860" opacity=".85"/></svg>
<div style="left:331px;top:471px;width:85px;height:18px;font-size:12px;line-height:18px;color:#000;white-space:nowrap">新建规则(<u>N</u>)...</div>
<div style="left:425px;top:467px;width:111px;height:25px;background:#e1e1e1;border:1px solid #adadad;box-sizing:border-box"></div>

<svg style="left:434px;top:471px" width="16" height="16" viewBox="0 0 16 16"><rect x="0.5" y="0.5" width="12" height="11" fill="#fff" stroke="#8a8a8a"/><path d="M0.5 4H12.5M0.5 8H12.5M4.5 0.5V11.5M8.5 0.5V11.5" stroke="#b8b8b8"/><path d="M6 14.5L7 11.5L13 5.5L15 7.5L9 13.5Z" fill="#3b78c4"/><path d="M6 14.5L7 11.5L9 13.5Z" fill="#f2c84b"/></svg>
<div style="left:453px;top:471px;width:85px;height:18px;font-size:12px;line-height:18px;color:#000;white-space:nowrap">编辑规则(<u>E</u>)...</div>
<div style="left:547px;top:467px;width:111px;height:25px;background:#e1e1e1;border:1px solid #adadad;box-sizing:border-box"></div>

<svg style="left:560px;top:472.5px" width="14" height="13.5" viewBox="0 0 14 13.5"><path d="M1 1L13 12.5M13 1L1 12.5" stroke="#4a4a4a" stroke-width="2.1" fill="none"/></svg>
<div style="left:579px;top:471px;width:80px;height:18px;font-size:12px;line-height:18px;color:#000;white-space:nowrap">删除规则(<u>D</u>)</div>
<div style="left:669px;top:467px;width:24px;height:24px;background:#dcdcdc;border:1px solid #bcbcbc;box-sizing:border-box"></div>
<svg style="left:676px;top:476.5px" width="10" height="6" viewBox="0 0 10 6"><path d="M0 6H10L5 0.5z" fill="#aaaaaa"/></svg>
<div style="left:704px;top:467px;width:24px;height:24px;background:#e1e1e1;border:1px solid #adadad;box-sizing:border-box"></div>
<svg style="left:711px;top:476px" width="10" height="6" viewBox="0 0 10 6"><path d="M0 0H10L5 5.8z" fill="#5c5c5c"/></svg>
<div style="left:300px;top:494px;width:632px;height:179px;background:#fff;border:1px solid #6a6a6a;border-left-width:2px;border-bottom-width:2px;border-right-width:2px;box-sizing:border-box"></div>
<div style="left:307px;top:496.5px;width:130px;height:25px;font-size:12px;line-height:25px;color:#000;white-space:nowrap">规则(按所示顺序应用)</div>
<div style="left:440px;top:496.5px;width:60px;height:25px;font-size:12px;line-height:25px;color:#000;white-space:nowrap">格式</div>
<div style="left:572.5px;top:496.5px;width:60px;height:25px;font-size:12px;line-height:25px;color:#000;white-space:nowrap">应用于</div>
<div style="left:824px;top:496.5px;width:90px;height:25px;font-size:12px;line-height:25px;color:#000;white-space:nowrap">如果为真则停止</div>
<div style="left:436px;top:495px;width:1px;height:25px;background:#e3e3e3"></div>
<div style="left:570px;top:495px;width:1px;height:25px;background:#e3e3e3"></div>
<div style="left:819px;top:495px;width:1px;height:25px;background:#e3e3e3"></div>
<div style="left:911px;top:495px;width:1px;height:25px;background:#e3e3e3"></div>
<div style="left:303px;top:520px;width:609px;height:29px;background:#e1e1e7"></div>
<div style="left:329px;top:526px;width:110px;height:18px;font-size:12px;line-height:18px;color:#000;white-space:nowrap;word-spacing:2px">单元格值 = "日"</div>
<div style="left:436px;top:524px;width:126px;height:22px;background:#fff"></div>
<div style="left:442px;top:524px;width:125px;height:22px;line-height:22px;color:#f81e1e;white-space:nowrap;font-size:14.6px">微软卓越<span style="font-size:12.6px;margin-left:6px">AaBbCc</span></div>
<div style="left:570px;top:523px;width:241px;height:25px;background:#fff;border:1px solid #9a9a9a;box-sizing:border-box"></div>
<div style="left:575px;top:527px;width:150px;height:18px;font-size:12px;line-height:18px;color:#000;white-space:nowrap;letter-spacing:0.3px">=$E$10:$AI$10</div>
<div style="left:789px;top:524px;width:21px;height:23px;background:#e1e1e1;border:1px solid #adadad;box-sizing:border-box"></div>
<div style="left:792px;top:529px;width:15px;height:13px;background:#fff"></div>
<svg style="left:795px;top:529px" width="8.5" height="10.2" viewBox="0 0 10 12"><path d="M5 0.5L9 5H6.2V8.5H3.8V5H1z" fill="#111"/><rect x="0.5" y="10" width="9" height="1.5" fill="#111"/></svg>
<div style="left:859px;top:526px;width:13px;height:13px;background:#fff;border:1px solid #333;box-sizing:border-box"></div>
<div style="left:329px;top:556px;width:110px;height:18px;font-size:12px;line-height:18px;color:#000;white-space:nowrap;word-spacing:2px">单元格值 = "六"</div>
<div style="left:442px;top:554px;width:125px;height:22px;line-height:22px;color:#f81e1e;white-space:nowrap;font-size:14.6px">微软卓越<span style="font-size:12.6px;margin-left:6px">AaBbCc</span></div>
<div style="left:570px;top:553px;width:241px;height:25px;background:#fff;border:1px solid #9a9a9a;box-sizing:border-box"></div>
<div style="left:575px;top:557px;width:150px;height:18px;font-size:12px;line-height:18px;color:#000;white-space:nowrap;letter-spacing:0.3px">=$E$10:$AI$10</div>
<div style="left:789px;top:554px;width:21px;height:23px;background:#e1e1e1;border:1px solid #adadad;box-sizing:border-box"></div>
<div style="left:792px;top:559px;width:15px;height:13px;background:#fff"></div>
<svg style="left:795px;top:559px" width="8.5" height="10.2" viewBox="0 0 10 12"><path d="M5 0.5L9 5H6.2V8.5H3.8V5H1z" fill="#111"/><rect x="0.5" y="10" width="9" height="1.5" fill="#111"/></svg>
<div style="left:859px;top:556px;width:13px;height:13px;background:#fff;border:1px solid #333;box-sizing:border-box"></div>
<div style="left:302px;top:579px;width:610px;height:1px;background:#e6e6e6"></div>
<div style="left:690px;top:678px;width:73px;height:25px;background:#e1e1e1;border:2px solid #0078d7;box-sizing:border-box;font-size:12px;line-height:23px;text-align:center;color:#000">确定</div>
<div style="left:774px;top:678px;width:73px;height:25px;background:#e1e1e1;border:1px solid #adadad;box-sizing:border-box;font-size:12px;line-height:25px;text-align:center;color:#000">关闭</div>
<div style="left:858px;top:678px;width:73px;height:25px;background:#dedede;border:1px solid #c3c3c3;box-sizing:border-box;font-size:12px;line-height:25px;text-align:center;color:#8a8a8a">应用</div>
</div>
<svg style="left:495px;top:570px" width="45" height="60" viewBox="495 570 45 60"><path d="M504.1 578 L518.8 588.7 L516.2 591.7 L529.5 623.8 L508.7 594.8 L505.1 596.9 Z" fill="#f83a3a"/></svg>
</div>
</body>
</html>
